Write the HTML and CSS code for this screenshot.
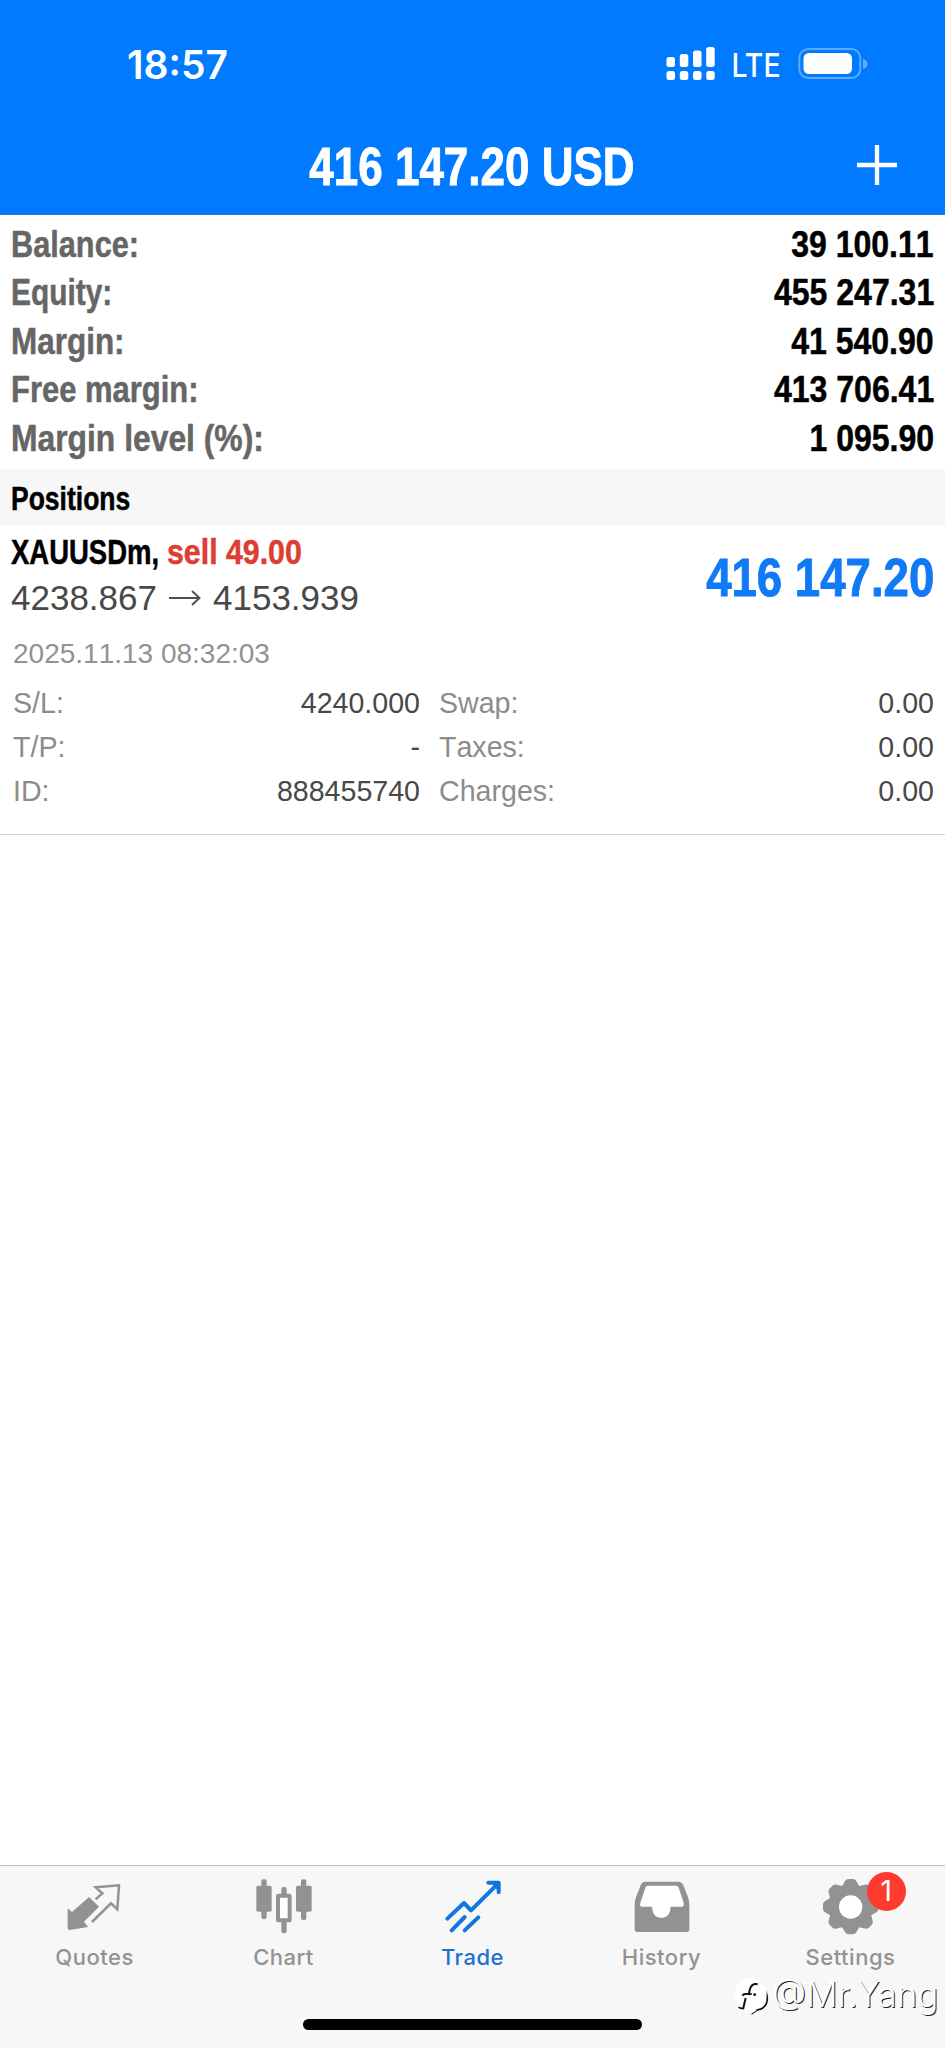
FILE: index.html
```html
<!DOCTYPE html>
<html lang="en">
<head>
<meta charset="utf-8">
<title>Trade</title>
<link rel="stylesheet" href="styles.css">
</head>
<body>
<div class="app">
  <header class="header">
    <div class="status">
      <span class="time">18:57</span>
      <svg class="status-icons" width="202" height="34" viewBox="0 0 202 34" fill="#fff">
        <rect x="0.5" y="10" width="8.5" height="10" rx="2.5"/><rect x="13.8" y="7" width="8.5" height="13" rx="2.5"/><rect x="27" y="3.5" width="8.5" height="16.5" rx="2.5"/><rect x="40.2" y="0" width="8.5" height="20" rx="2.5"/>
        <rect x="0.5" y="24" width="8.5" height="9" rx="2.5"/><rect x="13.8" y="24" width="8.5" height="9" rx="2.5"/><rect x="27" y="24" width="8.5" height="9" rx="2.5"/><rect x="40.2" y="24" width="8.5" height="9" rx="2.5"/>
        <text class="network" x="65.5" y="30.3" textLength="49" lengthAdjust="spacingAndGlyphs">LTE</text>
        <rect x="133.3" y="2" width="61" height="29" rx="9" fill="none" stroke="#5cabff" stroke-width="2"/>
        <rect x="137.5" y="6" width="48.5" height="21" rx="5.5"/>
        <path d="M197 12q4.5 1 4.5 5t-4.5 5z" fill="#5cabff"/>
      </svg>
    </div>
    <div class="titlebar">
      <span></span>
      <h1 class="title">416 147.20 USD</h1>
      <svg class="plus" width="40" height="40" viewBox="0 0 40 40"><path d="M20 0v40M0 20h40" stroke="#fff" stroke-width="4.3"/></svg>
    </div>
  </header>

  <section class="summary">
    <div class="row"><span class="label balance">Balance:</span><span class="amount">39 100.11</span></div>
    <div class="row"><span class="label equity">Equity:</span><span class="amount">455 247.31</span></div>
    <div class="row"><span class="label">Margin:</span><span class="amount">41 540.90</span></div>
    <div class="row"><span class="label free">Free margin:</span><span class="amount">413 706.41</span></div>
    <div class="row"><span class="label level">Margin level (%):</span><span class="amount">1 095.90</span></div>
  </section>

  <h2 class="section-head"><span class="section-name">Positions</span></h2>

  <article class="position">
    <div class="position-top">
      <div>
        <div class="symbol"><span class="symbol-name">XAUUSDm,</span> <span class="sell">sell 49.00</span></div>
        <div class="price">4238.867<svg class="arrow" width="32" height="16" viewBox="0 0 32 16" fill="none" stroke="#505050" stroke-width="1.9"><path d="M0 8h30M23 1l7.5 7-7.5 7"/></svg>4153.939</div>
      </div>
      <div class="profit">416 147.20</div>
    </div>
    <div class="date">2025.11.13 08:32:03</div>
    <div class="details">
      <span>S/L:</span><span class="value">4240.000</span><span class="second">Swap:</span><span class="value">0.00</span>
      <span>T/P:</span><span class="value">-</span><span class="second">Taxes:</span><span class="value">0.00</span>
      <span>ID:</span><span class="value">888455740</span><span class="second">Charges:</span><span class="value">0.00</span>
    </div>
  </article>

  <nav class="tabbar">
    <div class="tabs">
      <div class="tab">
        <svg width="60" height="60" viewBox="193 78 180 180">
          <path fill="#929292" d="M201 175l13 11 51-45 30 29-45 45 12 16-56 9q-5 0-5-6z"/>
          <path fill="none" stroke="#929292" stroke-width="7.5" d="M285 148l20-18-20-18 70-6-5 72-19-18-57 56"/>
        </svg>
        <span>Quotes</span>
      </div>
      <div class="tab">
        <svg width="60" height="60" viewBox="760 78 180 180" fill="#929292">
          <rect x="767" y="107" width="46" height="78" rx="5"/><rect x="782" y="88" width="16" height="119" rx="6"/>
          <rect x="886" y="107" width="47" height="78" rx="5"/><rect x="901" y="88" width="16" height="122" rx="6"/>
          <rect x="842" y="111" width="16" height="139" rx="6"/>
          <rect x="832" y="137" width="35" height="74" rx="2" fill="#fff" stroke="#929292" stroke-width="12"/>
        </svg>
        <span>Chart</span>
      </div>
      <div class="tab active">
        <svg width="60" height="60" viewBox="307 78 180 180" fill="none" stroke="#1275e0" stroke-width="12" stroke-linecap="round" stroke-linejoin="round">
          <path d="M320 206l50-47 21 22 78-77M443 98h31v29M333 241l39-40M372 241l41-39"/>
          <path d="M455 100h18v20z" fill="#1275e0" stroke-width="4"/>
        </svg>
        <span>Trade</span>
      </div>
      <div class="tab">
        <svg width="60" height="60" viewBox="109 78 180 180">
          <path fill="#929292" d="M148 95H248Q258 95 263 106L277 142Q281 153 281 164V238Q281 246 273 246H125Q117 246 117 238V164Q117 153 121 142L135 106Q140 95 148 95Z"/>
          <path fill="#fff" d="M156 107H241Q247 107 249 113L264 158Q266 170 258 170H225Q223 204 197 204T169 170H139Q131 170 134 158L149 113Q151 107 156 107Z"/>
        </svg>
        <span>History</span>
      </div>
      <div class="tab">
        <svg width="60" height="60" viewBox="676 78 180 180" fill="#929292">
          <defs><path id="tooth" d="M735 116L746 97Q751 87 759 87H771Q779 87 784 97L795 116Z"/></defs>
          <circle cx="765" cy="170" r="66"/>
          <use href="#tooth"/><use href="#tooth" transform="rotate(45 765 170)"/><use href="#tooth" transform="rotate(90 765 170)"/><use href="#tooth" transform="rotate(135 765 170)"/><use href="#tooth" transform="rotate(180 765 170)"/><use href="#tooth" transform="rotate(225 765 170)"/><use href="#tooth" transform="rotate(270 765 170)"/><use href="#tooth" transform="rotate(315 765 170)"/>
          <circle cx="765" cy="171" r="35" fill="#fff"/>
        </svg>
        <span>Settings</span>
        <b class="badge">1</b>
      </div>
    </div>
    <div class="home"></div>
    <div class="watermark">
      <svg width="36" height="40" viewBox="0 0 108 120">
        <path d="M80 28q24 20 19 49-5 22-30 25l-17 12M14 93q8 8 18 0" fill="none" stroke="#111" stroke-width="5"/>
        <circle cx="50" cy="54" r="48" fill="#fff"/>
        <path d="M68 103l-18 12 5-16z" fill="#fff"/>
        <path d="M71 25q-20-4-24 17l-3 15M25 59q4-6 11-5h17M35 66l-8 34" fill="none" stroke="#111" stroke-width="6"/>
        <circle cx="62" cy="56" r="4"/>
      </svg>
      <span class="handle">@Mr.Yang</span>
    </div>
  </nav>
</div>
</body>
</html>
```
FILE: styles.css
```css
* { box-sizing: border-box; }
body { margin: 0; background: #fff; }
.app {
  width: 945px;
  height: 2048px;
  display: flex;
  flex-direction: column;
  overflow: hidden;
  font-family: "Liberation Sans", Arial, sans-serif;
  font-kerning: none;
}
.header { height: 215px; background: #007aff; color: #fff; border-bottom: 1px solid #2a77d2; }
.status {
  height: 137px;
  padding: 41px 77px 0 127px;
  display: flex;
  justify-content: space-between;
  align-items: flex-start;
}
.time { font: 600 39px/48px Inter, sans-serif; }
.status-icons { margin-top: 6px; display: block; overflow: visible; }
.network { font: 500 32.5px Inter, sans-serif; }
.titlebar {
  display: grid;
  grid-template-columns: 1fr auto 1fr;
  padding-right: 48px;
  padding-left: 48px;
}
.title {
  margin: 0 0 0 -1px;
  font-size: 53px;
  line-height: 60px;
  font-weight: 700;
  white-space: nowrap;
  transform: scaleX(.83);
  -webkit-text-stroke: .9px;
}
.plus { justify-self: end; margin-top: 8px; }

.summary { height: 254px; padding: 6px 11px 0; }
.row {
  display: flex;
  justify-content: space-between;
  font-size: 37px;
  font-weight: 700;
  line-height: 48.4px;
  white-space: nowrap;
  -webkit-text-stroke: .5px;
}
.label { color: #666; transform: scaleX(.85); transform-origin: left; }
.balance { transform: scaleX(.83); }
.equity { transform: scaleX(.808); }
.free { transform: scaleX(.837); }
.level { transform: scaleX(.86); }
.amount { color: #000; transform: scaleX(.865); transform-origin: right; }
.section-head {
  margin: 0;
  height: 56px;
  padding: 3px 11px 0;
  background: #f7f7f7;
  font-size: 33px;
  line-height: 54px;
  -webkit-text-stroke: .5px;
}
.section-name { display: inline-block; transform: scaleX(.803); transform-origin: left; }

.position { padding: 3px 11px 21px; border-bottom: 1px solid #d0d0d0; }
.position-top { display: flex; justify-content: space-between; }
.symbol {
  display: flex;
  font-size: 35px;
  font-weight: 700;
  line-height: 48px;
  white-space: nowrap;
  -webkit-text-stroke: .5px;
}
.symbol-name { width: 155px; transform: scaleX(.785); transform-origin: 0 0; }
.symbol-name { width: auto; margin-right: -33px; }
.sell { color: #dc3e31; transform: scaleX(.866); transform-origin: left; }
.price { display: flex; align-items: center; height: 44px; line-height: 44px; font-size: 35px; color: #484848; }
.arrow { margin: 0 12px; }
.profit {
  margin-top: 20px;
  font-size: 53px;
  line-height: 60px;
  font-weight: 700;
  color: #1079f5;
  white-space: nowrap;
  transform: scaleX(.86);
  transform-origin: right;
  -webkit-text-stroke: .9px;
}
.date { margin: 12px 0 5px 2px; font-size: 28px; line-height: 44px; color: #929292; }
.details {
  display: grid;
  grid-template-columns: 140px 267px 1fr 140px;
  padding-left: 2px;
  font-size: 28.6px;
  line-height: 44px;
  color: #8c8c8c;
}
.value { text-align: right; color: #484848; }
.second { padding-left: 19px; }

.tabbar {
  position: relative;
  margin-top: auto;
  height: 183px;
  border-top: 1px solid #bcbcbc;
  background: #f7f7f7;
}
.tabs { display: grid; grid-template-columns: repeat(5, 189px); }
.tab {
  position: relative;
  display: flex;
  flex-direction: column;
  align-items: center;
  padding-top: 10px;
  font: 500 22px/30px Inter, sans-serif;
  letter-spacing: .5px;
  color: #929292;
}
.tab svg { display: block; margin-bottom: 6px; }
.active { color: #1a74cf; }
.badge {
  position: absolute;
  left: 111px;
  top: 6px;
  width: 39px;
  height: 39px;
  border-radius: 50%;
  background: #ff3b30;
  color: #fff;
  font: 400 28px/39px Inter, sans-serif;
  text-align: center;
}
.home { width: 339px; height: 11px; margin: 47px auto 0; border-radius: 6px; background: #000; }
.watermark {
  position: absolute;
  left: 734px;
  top: 110px;
  display: flex;
  align-items: flex-start;
  color: #fff;
}
.handle {
  margin: -2px 0 0 2px;
  font: 300 35px/40px Inter, sans-serif;
  text-shadow: 1px 1px 0 #222;
  white-space: nowrap;
}
```
